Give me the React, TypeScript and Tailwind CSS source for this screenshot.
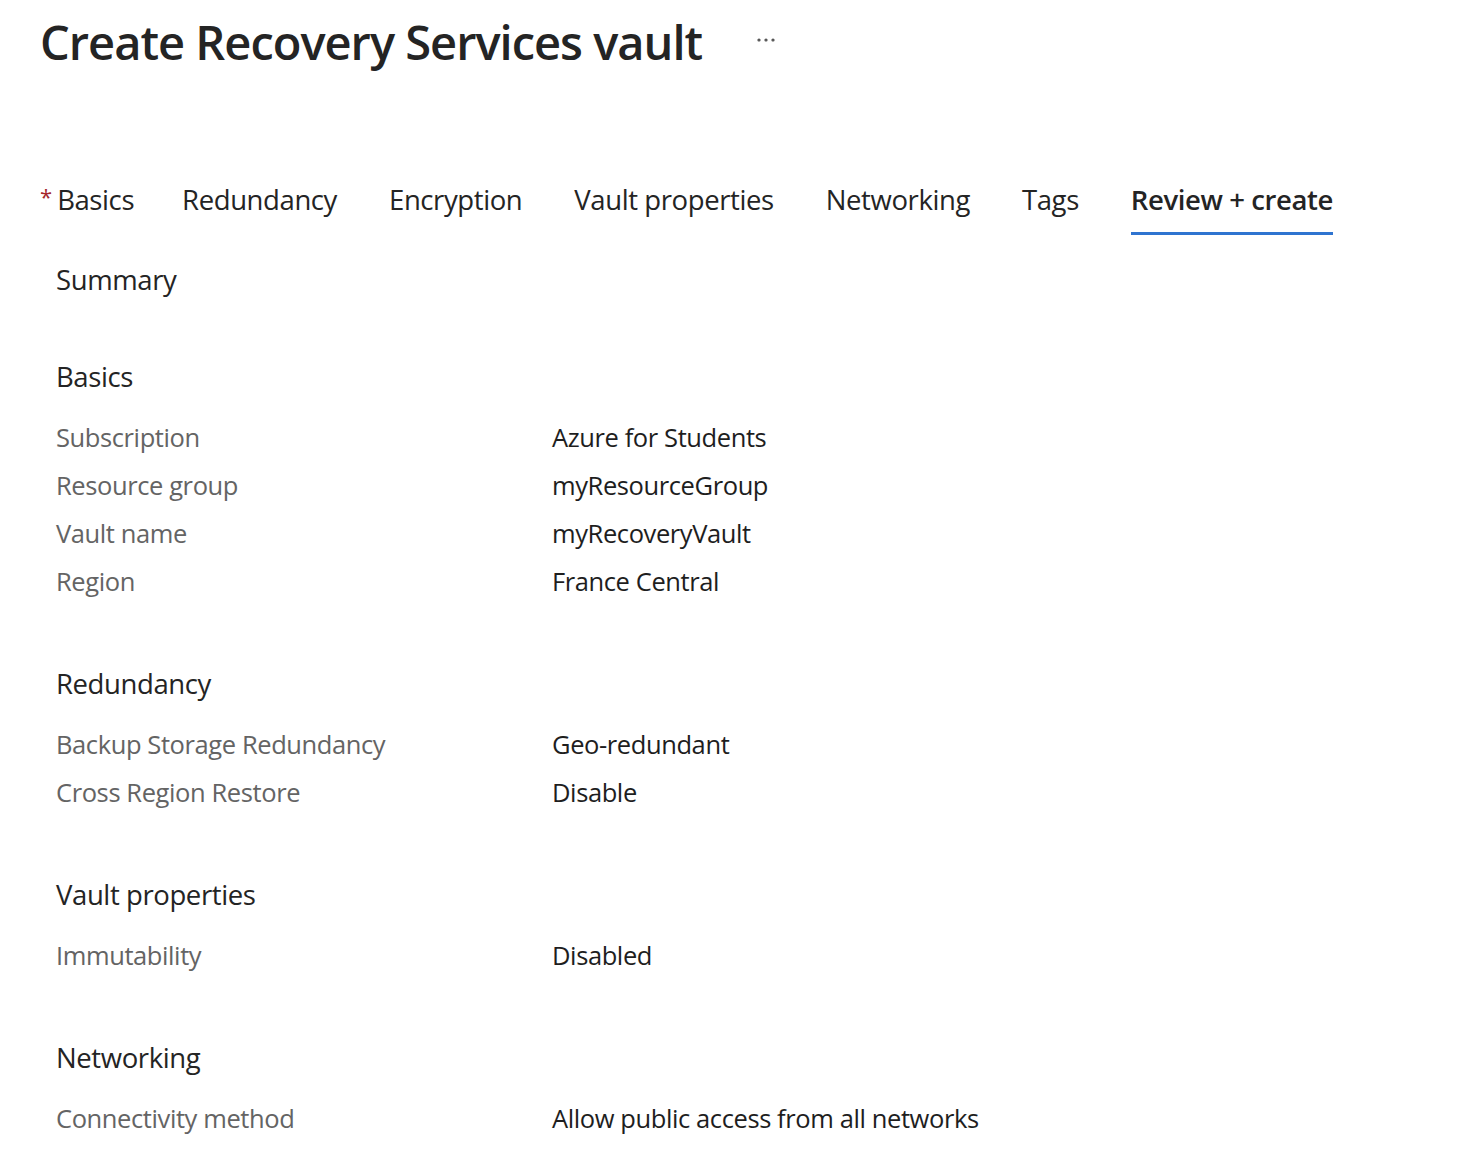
import { MoreHorizontal } from 'lucide-react'

const tabs = ['Basics', 'Redundancy', 'Encryption', 'Vault properties', 'Networking', 'Tags', 'Review + create']

const sections: { title: string; rows: [string, string][] }[] = [
  {
    title: 'Basics',
    rows: [
      ['Subscription', 'Azure for Students'],
      ['Resource group', 'myResourceGroup'],
      ['Vault name', 'myRecoveryVault'],
      ['Region', 'France Central'],
    ],
  },
  {
    title: 'Redundancy',
    rows: [
      ['Backup Storage Redundancy', 'Geo-redundant'],
      ['Cross Region Restore', 'Disable'],
    ],
  },
  {
    title: 'Vault properties',
    rows: [['Immutability', 'Disabled']],
  },
  {
    title: 'Networking',
    rows: [['Connectivity method', 'Allow public access from all networks']],
  },
]

export default function App() {
  return (
    <div className="min-h-[1170px] w-[1470px] bg-white pt-[10px] text-[#242424] font-['Open_Sans',sans-serif]">
      <div className="flex h-[64px] items-center pl-10">
        <h1 className="text-[47px] leading-[64px] font-semibold tracking-[-1px] text-[#242424]">
          Create Recovery Services vault
        </h1>
        <MoreHorizontal className="ml-[52px] mb-1 h-6 w-6 text-[#444]" strokeWidth={1.2} />
      </div>

      <div className="mt-[106px] flex pl-10">
        {tabs.map((t, i) => {
          const active = t === 'Review + create'
          return (
            <div key={t} className={`flex flex-col ${i === 0 ? 'pr-[22px]' : 'px-[26px]'}`}>
              <div className="flex h-10 items-center">
                {i === 0 && <span className="mr-[5px] -mt-2 text-[22px] leading-none text-[#a4262c]">*</span>}
                <span
                  className={`text-[27.5px] leading-10 tracking-[-0.4px] ${active ? 'font-semibold text-[#242424]' : 'text-[#242424]'}`}
                >
                  {t}
                </span>
              </div>
              <div className={`mt-3 h-[3px] ${active ? 'bg-[#2f74d0]' : 'bg-transparent'}`} />
            </div>
          )
        })}
      </div>

      <div className="mt-[27px] pl-[56px]">
        <div className="h-9 text-[27.5px] leading-9 tracking-[-0.4px] text-[#242424]">Summary</div>
        {sections.map((s) => (
          <div key={s.title} className="mt-[61px]">
            <div className="h-9 text-[27.5px] leading-9 tracking-[-0.4px] text-[#242424]">{s.title}</div>
            <div className="mt-[18px]">
              {s.rows.map(([k, v]) => (
                <div key={k} className="flex h-12 items-center text-[25.5px] leading-[48px] tracking-[-0.4px]">
                  <div className="w-[496px] text-[#646464]">{k}</div>
                  <div className="text-[#1e1e1e]">{v}</div>
                </div>
              ))}
            </div>
          </div>
        ))}
      </div>
    </div>
  )
}
